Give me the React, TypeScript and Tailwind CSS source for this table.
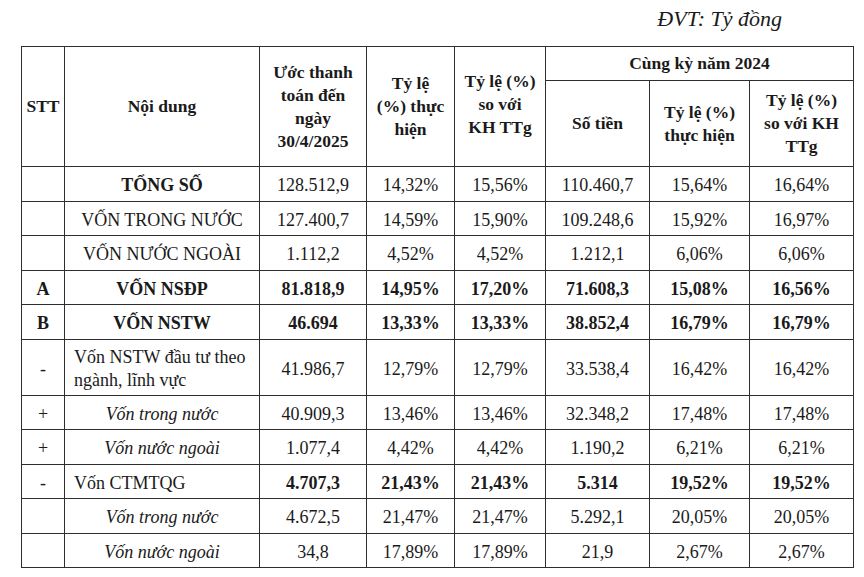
const rows = [
  { stt: '', label: 'TỔNG SỐ', labelStyle: 'bold-center', vals: ['128.512,9', '14,32%', '15,56%', '110.460,7', '15,64%', '16,64%'], boldVals: false },
  { stt: '', label: 'VỐN TRONG NƯỚC', labelStyle: 'center', vals: ['127.400,7', '14,59%', '15,90%', '109.248,6', '15,92%', '16,97%'], boldVals: false },
  { stt: '', label: 'VỐN NƯỚC NGOÀI', labelStyle: 'center', vals: ['1.112,2', '4,52%', '4,52%', '1.212,1', '6,06%', '6,06%'], boldVals: false },
  { stt: 'A', label: 'VỐN NSĐP', labelStyle: 'bold-center', vals: ['81.818,9', '14,95%', '17,20%', '71.608,3', '15,08%', '16,56%'], boldVals: true },
  { stt: 'B', label: 'VỐN NSTW', labelStyle: 'bold-center', vals: ['46.694', '13,33%', '13,33%', '38.852,4', '16,79%', '16,79%'], boldVals: true },
  { stt: '-', label: 'Vốn NSTW đầu tư theo ngành, lĩnh vực', labelStyle: 'left', vals: ['41.986,7', '12,79%', '12,79%', '33.538,4', '16,42%', '16,42%'], boldVals: false, tall: true },
  { stt: '+', label: 'Vốn trong nước', labelStyle: 'italic', vals: ['40.909,3', '13,46%', '13,46%', '32.348,2', '17,48%', '17,48%'], boldVals: false },
  { stt: '+', label: 'Vốn nước ngoài', labelStyle: 'italic', vals: ['1.077,4', '4,42%', '4,42%', '1.190,2', '6,21%', '6,21%'], boldVals: false },
  { stt: '-', label: 'Vốn CTMTQG', labelStyle: 'left', vals: ['4.707,3', '21,43%', '21,43%', '5.314', '19,52%', '19,52%'], boldVals: true },
  { stt: '', label: 'Vốn trong nước', labelStyle: 'italic', vals: ['4.672,5', '21,47%', '21,47%', '5.292,1', '20,05%', '20,05%'], boldVals: false },
  { stt: '', label: 'Vốn nước ngoài', labelStyle: 'italic', vals: ['34,8', '17,89%', '17,89%', '21,9', '2,67%', '2,67%'], boldVals: false },
];

function labelClass(style: string) {
  switch (style) {
    case 'bold-center':
      return 'text-center font-bold';
    case 'center':
      return 'text-center';
    case 'italic':
      return 'text-center italic';
    default:
      return 'text-left pl-[9px]';
  }
}

const cell = 'border border-[#2e2e2e] p-0 align-middle';
// body cells sit a touch lower than centre in the scan
const bodyCell = 'border border-[#2e2e2e] px-0 pb-0 pt-[4px] align-middle';

export default function App() {
  return (
    <div className="w-[864px] h-[577px] bg-white text-[#1a1a1a] font-['Liberation_Serif',serif] overflow-hidden">
      <div className="h-[46px] flex justify-end items-start pr-[82px] pt-[5px]">
        <span className="italic text-[22px] leading-[28px]">ĐVT: Tỷ đồng</span>
      </div>
      <table className="ml-[21px] w-[833px] table-fixed border-collapse text-[18px] leading-[23px]">
        <colgroup>
          <col className="w-[43px]" />
          <col className="w-[195px]" />
          <col className="w-[107px]" />
          <col className="w-[88px]" />
          <col className="w-[91px]" />
          <col className="w-[104px]" />
          <col className="w-[100px]" />
          <col className="w-[104px]" />
        </colgroup>
        <thead className="font-bold text-center text-[17.5px]">
          <tr className="h-[34px]">
            <th rowSpan={2} className={cell}>STT</th>
            <th rowSpan={2} className={cell}>Nội dung</th>
            <th rowSpan={2} className={cell}>
              Ước thanh
              <br />
              toán đến
              <br />
              ngày
              <br />
              30/4/2025
            </th>
            <th rowSpan={2} className={cell}>
              Tỷ lệ
              <br />
              (%) thực
              <br />
              hiện
            </th>
            <th rowSpan={2} className={`${cell} pb-[4px]`}>
              Tỷ lệ (%)
              <br />
              so với
              <br />
              KH TTg
            </th>
            <th colSpan={3} className={cell}>Cùng kỳ năm 2024</th>
          </tr>
          <tr className="h-[86px]">
            <th className={cell}>Số tiền</th>
            <th className={cell}>
              Tỷ lệ (%)
              <br />
              thực hiện
            </th>
            <th className={cell}>
              Tỷ lệ (%)
              <br />
              so với KH
              <br />
              TTg
            </th>
          </tr>
        </thead>
        <tbody>
          {rows.map((r, i) => (
            <tr key={i} className={r.tall ? 'h-[56px]' : 'h-[34.5px]'}>
              <td className={`${bodyCell} text-center ${r.stt === 'A' || r.stt === 'B' ? 'font-bold' : ''}`}>{r.stt}</td>
              <td className={`${bodyCell} ${labelClass(r.labelStyle)}`}>
                {r.tall ? (
                  <>
                    Vốn NSTW đầu tư theo
                    <br />
                    ngành, lĩnh vực
                  </>
                ) : (
                  r.label
                )}
              </td>
              {r.vals.map((v, j) => (
                <td key={j} className={`${bodyCell} text-center ${r.boldVals ? 'font-bold' : ''}`}>
                  {v}
                </td>
              ))}
            </tr>
          ))}
        </tbody>
      </table>
    </div>
  );
}
